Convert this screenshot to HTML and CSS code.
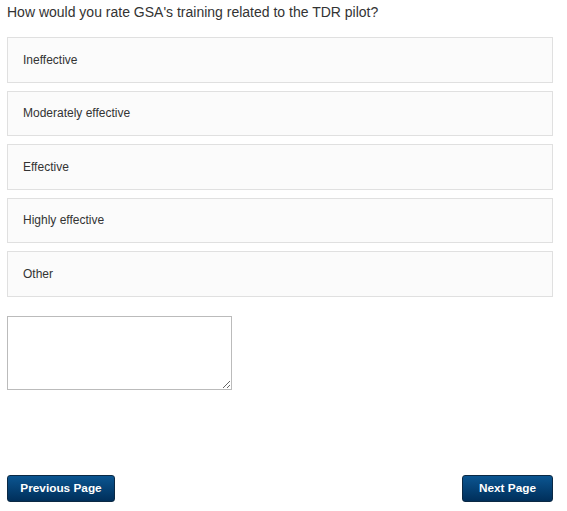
FILE: index.html
```html
<!DOCTYPE html>
<html>
<head>
<meta charset="utf-8">
<link rel="stylesheet" href="styles.css">
</head>
<body>
<div class="page">
  <div class="question">How would you rate GSA's training related to the TDR pilot?</div>
  <div class="options">
    <div class="option">Ineffective</div>
    <div class="option">Moderately effective</div>
    <div class="option">Effective</div>
    <div class="option">Highly effective</div>
    <div class="option">Other</div>
  </div>
  <textarea class="other-text"></textarea>
  <div class="nav">
    <button class="btn btn-prev">Previous Page</button>
    <button class="btn btn-next">Next Page</button>
  </div>
</div>
</body>
</html>
```
FILE: styles.css
```css
html, body {
  margin: 0;
  padding: 0;
  background: #fff;
}
.page {
  width: 546px;
  padding: 0 7px;
  font-family: "Liberation Sans", Arial, sans-serif;
  color: #333;
}
.question {
  font-size: 14px;
  line-height: 20px;
  padding-top: 2px;
  color: #333;
}
.options {
  margin-top: 15px;
  display: flex;
  flex-direction: column;
  gap: 8px;
}
.option {
  box-sizing: border-box;
  height: 45.5px;
  border: 1px solid #e0e0e0;
  background: #fbfbfb;
  font-size: 12px;
  display: flex;
  align-items: center;
  padding-left: 15px;
  color: #333;
}
.other-text {
  display: block;
  box-sizing: border-box;
  width: 225px;
  height: 74px;
  margin: 19px 0 0 0;
  border: 1px solid #bbb;
  padding: 2px;
  resize: both;
}
.nav {
  margin-top: 85px;
  display: flex;
  justify-content: space-between;
}
.btn {
  box-sizing: border-box;
  height: 27px;
  padding: 0;
  border: 1px solid #0b2944;
  border-radius: 3px;
  background: linear-gradient(to bottom, #0b5591, #002f5a);
  color: #fff;
  font-family: "Liberation Sans", Arial, sans-serif;
  font-weight: bold;
  font-size: 11.8px;
  text-align: center;
  cursor: pointer;
}
.btn-prev {
  width: 108px;
}
.btn-next {
  width: 91px;
}
```
